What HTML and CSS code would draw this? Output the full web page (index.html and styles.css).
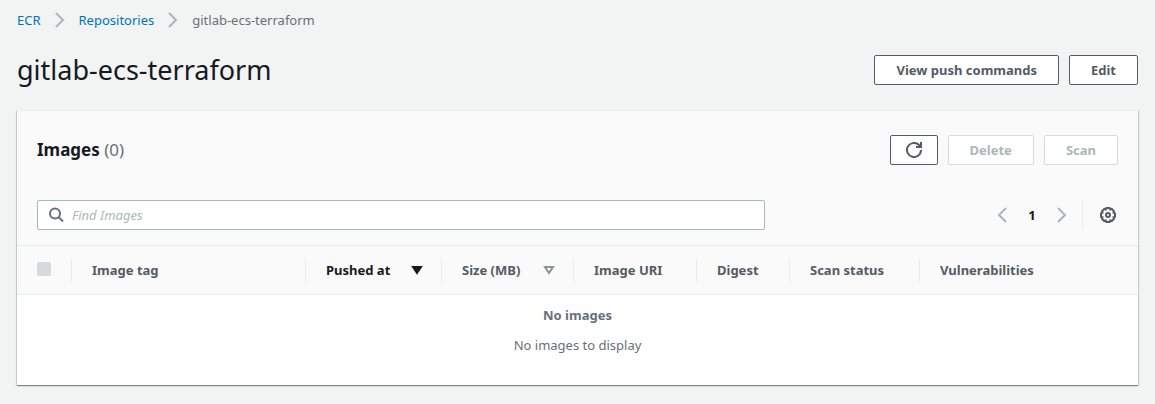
FILE: index.html
```html
<!DOCTYPE html>
<html lang="en">
<head>
<meta charset="utf-8">
<meta name="viewport" content="width=device-width, initial-scale=1">
<title>gitlab-ecs-terraform</title>
<link rel="stylesheet" href="styles.css">
</head>
<body>
<nav class="breadcrumbs" aria-label="Breadcrumbs">
  <a href="#ecr">ECR</a>
  <svg class="chevron" viewBox="0 0 16 16" aria-hidden="true"><path d="M4 1l7 7-7 7"/></svg>
  <a href="#repositories">Repositories</a>
  <svg class="chevron" viewBox="0 0 16 16" aria-hidden="true"><path d="M4 1l7 7-7 7"/></svg>
  <span>gitlab-ecs-terraform</span>
</nav>
<main>
  <header class="page-header">
    <h1>gitlab-ecs-terraform</h1>
    <div class="actions">
      <button class="btn" type="button">View push commands</button>
      <button class="btn" type="button">Edit</button>
    </div>
  </header>
  <section class="panel">
    <div class="panel-header">
      <h2>Images <span class="count">(0)</span></h2>
      <div class="actions">
        <button class="btn btn-icon" type="button" aria-label="Refresh">
          <svg class="icon" viewBox="0 0 16 16" aria-hidden="true"><path d="M15 8A7 7 0 1 1 12.500 2.600L15 5M15 0v5h-5"/></svg>
        </button>
        <button class="btn" type="button" disabled>Delete</button>
        <button class="btn" type="button" disabled>Scan</button>
      </div>
    </div>
    <div class="tools">
      <label class="search">
        <svg class="icon" viewBox="0 0 16 16" aria-hidden="true"><circle cx="7" cy="6.500" r="5"/><path d="M10.500 10l4.500 4.500"/></svg>
        <input type="search" placeholder="Find Images" aria-label="Find Images">
      </label>
      <div class="pager">
        <button class="plain" type="button" aria-label="Previous page" disabled><svg class="chevron" viewBox="0 0 16 16" aria-hidden="true"><path d="M12 1L5 8l7 7"/></svg></button>
        <button class="plain page" type="button">1</button>
        <button class="plain" type="button" aria-label="Next page" disabled><svg class="chevron" viewBox="0 0 16 16" aria-hidden="true"><path d="M4 1l7 7-7 7"/></svg></button>
        <button class="plain settings" type="button" aria-label="Preferences"><svg class="icon" viewBox="0 0 16 16" aria-hidden="true"><path d="M6.300 1h3.400l.6 1.500 1.500-.5L14 4.200l-.5 1.500 1.500.6v3.400l-1.500.6.5 1.500-2.200 2.200-1.500-.5-.6 1.500H6.300l-.6-1.500-1.500.5L2 11.800l.5-1.500L1 9.700V6.300l1.500-.6L2 4.200 4.200 2l1.500.5z"/><circle cx="8" cy="8" r="2"/></svg></button>
      </div>
    </div>
    <table class="images">
      <colgroup><col class="c-check"><col class="c-tag"><col class="c-pushed"><col class="c-size"><col class="c-uri"><col class="c-digest"><col class="c-scan"><col></colgroup>
      <thead>
        <tr>
          <th><input class="check" type="checkbox" aria-label="Select all images" disabled></th>
          <th scope="col"><div class="head">Image tag</div></th>
          <th scope="col" aria-sort="descending"><div class="head sorted">Pushed at <svg class="sort" viewBox="0 0 12 10" aria-hidden="true"><path d="M2 2h8L6 8z"/></svg></div></th>
          <th scope="col"><div class="head">Size (MB) <svg class="sort hollow" viewBox="0 0 12 10" aria-hidden="true"><path d="M2 2h8L6 8z"/></svg></div></th>
          <th scope="col"><div class="head">Image URI</div></th>
          <th scope="col"><div class="head">Digest</div></th>
          <th scope="col"><div class="head">Scan status</div></th>
          <th scope="col"><div class="head">Vulnerabilities</div></th>
        </tr>
      </thead>
      <tbody>
        <tr><td class="empty" colspan="8"><strong>No images</strong><p>No images to display</p></td></tr>
      </tbody>
    </table>
  </section>
</main>
</body>
</html>
```
FILE: styles.css
```css
* { box-sizing: border-box; }
body {
  margin: 0;
  padding: 10px 17px 19px;
  background: #f2f3f3;
  color: #16191f;
  font: 13px/20px "Noto Sans", "Open Sans", sans-serif;
}
h1, h2, p { margin: 0; }
svg { display: block; fill: none; stroke: currentColor; flex: none; }
.icon { width: 16px; height: 16px; stroke-width: 2; }
.chevron { width: 16px; height: 16px; stroke: #aab7b8; stroke-width: 2; }
.breadcrumbs { display: flex; align-items: center; gap: 11px; color: #687078; }
.breadcrumbs a { color: #0073bb; text-decoration: none; }
.page-header { display: flex; align-items: center; justify-content: space-between; padding: 21px 0; }
h1 { font-size: 27px; line-height: 38px; font-weight: 400; }
.actions { display: flex; gap: 10px; }
.btn {
  height: 30px;
  padding: 0 21px;
  border: 1px solid #545b64;
  border-radius: 2px;
  background: #fff;
  color: #545b64;
  font: inherit;
  font-weight: 700;
}
.btn:disabled { border-color: #d5dbdb; color: #aab7b8; }
.btn-icon { padding: 0 15px; }
.panel {
  border-top: 1px solid #eaeded;
  background: #fff;
  box-shadow: 0 1px 1px 0 rgba(0, 28, 36, .3), 1px 1px 1px 0 rgba(0, 28, 36, .15), -1px 1px 1px 0 rgba(0, 28, 36, .15);
}
.panel-header, .tools { display: flex; align-items: center; justify-content: space-between; background: #fafafa; }
.panel-header { padding: 24px 20px 20px; }
h2 { font-size: 17px; line-height: 22px; font-weight: 700; }
.count { color: #687078; font-weight: 400; }
.tools { padding: 15px 20px; gap: 20px; }
.search {
  display: flex;
  flex: 0 1 728px;
  align-items: center;
  gap: 8px;
  height: 30px;
  padding: 0 10px;
  border: 1px solid #aab7b8;
  border-radius: 2px;
  background: #fff;
  color: #687078;
}
.search input { flex: 1; min-width: 0; padding: 0; border: 0; outline: 0; background: none; font: inherit; }
.search input::placeholder { color: #aab7b8; font-style: italic; opacity: 1; }
.pager { display: flex; align-items: center; }
.plain { padding: 0; border: 0; background: none; color: #545b64; font: inherit; }
.page { width: 44px; color: #16191f; font-weight: 700; }
.settings { display: flex; align-items: center; height: 30px; margin-left: 12px; padding: 0 2px 0 17px; border-left: 1px solid #eaeded; }
.images { width: 100%; border-collapse: collapse; table-layout: fixed; }
.images thead { background: #fafafa; border-top: 1px solid #eaeded; border-bottom: 1px solid #eaeded; color: #545b64; }
.images th { padding: 12px 0; text-align: left; font-weight: 700; white-space: nowrap; }
.c-check { width: 54px; }
.c-tag { width: 234px; }
.c-pushed { width: 136px; }
.c-size { width: 132px; }
.c-uri { width: 123px; }
.c-digest { width: 93px; }
.c-scan { width: 130px; }
.head { display: flex; align-items: center; justify-content: space-between; height: 24px; padding: 0 18px 0 20px; border-left: 1px solid #eaeded; }
.sorted { color: #16191f; }
.sort { width: 12px; height: 10px; fill: currentColor; stroke-width: 2; }
.hollow { fill: none; color: #879596; }
.check { display: block; appearance: none; width: 14px; height: 14px; margin: 0 0 2px 20px; border-radius: 2px; background: #d5dbdb; }
.empty { padding: 10px 20px 30px; color: #687078; text-align: center; }
.empty p { margin-top: 10px; }
```
